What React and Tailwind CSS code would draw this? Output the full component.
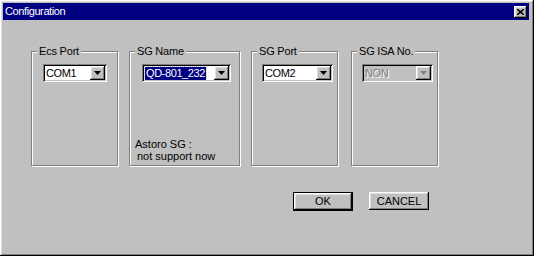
import React from 'react';

const raised =
  'shadow-[inset_-1px_-1px_0_#000,inset_1px_1px_0_#fff,inset_-2px_-2px_0_#808080,inset_2px_2px_0_#dfdfdf]';
const sunken =
  'shadow-[inset_1px_1px_0_#808080,inset_-1px_-1px_0_#fff,inset_2px_2px_0_#000,inset_-2px_-2px_0_#c0c0c0]';

const Arrow = ({ disabled }) => (
  <svg width="7" height="4" viewBox="0 0 7 4">
    <path d="M0 0h7L3.5 4z" fill={disabled ? '#808080' : '#000'} />
  </svg>
);

const Combo = ({ value, width, selected, disabled }) => (
  <div
    className={`flex h-[18px] items-stretch p-[2px] ${sunken} ${disabled ? 'bg-[#c0c0c0]' : 'bg-white'}`}
    style={{ width }}
  >
    <div className="flex flex-1 items-center pl-[1px] text-[11px] leading-none tracking-[-0.4px]">
      {selected ? (
        <span className="bg-[#000080] px-[1px] py-[1px] text-white outline-1 outline-dotted outline-[#c0c0c0]">
          {value}
        </span>
      ) : (
        <span className={disabled ? 'text-[#808080] [text-shadow:1px_1px_0_#fff]' : 'text-black'}>
          {value}
        </span>
      )}
    </div>
    <div className={`flex w-[15px] items-center justify-center bg-[#c0c0c0] ${raised}`}>
      <Arrow disabled={disabled} />
    </div>
  </div>
);

const GroupBox = ({ label, width, className, children }) => (
  <div
    className={`relative flex h-[115px] flex-col border border-[#808080] shadow-[inset_1px_1px_0_#fff,1px_1px_0_#fff] ${className}`}
    style={{ width }}
  >
    <span className="absolute left-[5px] top-[-8px] bg-[#c0c0c0] px-[2px] text-[11px] leading-[14px] tracking-[-0.2px] text-black">
      {label}
    </span>
    {children}
  </div>
);

export default function App() {
  return (
    <div
      className={`flex h-[256px] w-[534px] flex-col bg-[#c0c0c0] p-[3px] font-['Liberation_Sans',Arial,sans-serif] ${raised}`}
    >
      <div className="flex h-[17px] w-[526px] items-center justify-between bg-[#000080] pl-[2px] pr-[2px]">
        <span className="text-[11px] leading-none tracking-[-0.4px] text-white">Configuration</span>
        <div className={`flex h-[12px] w-[13px] items-center justify-center bg-[#c0c0c0] ${raised}`}>
          <svg width="7" height="6" viewBox="0 0 7 6">
            <path d="M0 0l7 6M7 0L0 6" stroke="#000" strokeWidth="1.6" />
          </svg>
        </div>
      </div>

      <div className="flex pl-[28px] pt-[31px]">
        <GroupBox label="Ecs Port" width={87} className="pl-[11px] pt-[12px]">
          <Combo value="COM1" width={64} />
        </GroupBox>
        <GroupBox label="SG Name" width={111} className="ml-[11px] pl-[12px] pt-[12px]">
          <Combo value="QD-801_232" width={89} selected />
          <div className="mt-auto pb-[3px] text-[11px] leading-[12px] text-black">
            <div className="-ml-[7px]">Astoro SG :</div>
            <div className="-ml-[5px]">not support now</div>
          </div>
        </GroupBox>
        <GroupBox label="SG Port" width={87} className="ml-[11px] pl-[10px] pt-[12px]">
          <Combo value="COM2" width={71} />
        </GroupBox>
        <GroupBox label="SG ISA No." width={87} className="ml-[13px] pl-[10px] pt-[12px]">
          <Combo value="NON" width={71} disabled />
        </GroupBox>
      </div>

      <div className="ml-[290px] mt-[26px] flex gap-[16px]">
        <button className="h-[19px] w-[60px] border border-black bg-[#c0c0c0] p-0 text-[11px] text-black">
          <div className={`flex h-full w-full items-center justify-center ${raised}`}>OK</div>
        </button>
        <button
          className={`flex h-[18px] w-[60px] items-center justify-center bg-[#c0c0c0] text-[11px] text-black ${raised}`}
        >
          CANCEL
        </button>
      </div>
    </div>
  );
}
